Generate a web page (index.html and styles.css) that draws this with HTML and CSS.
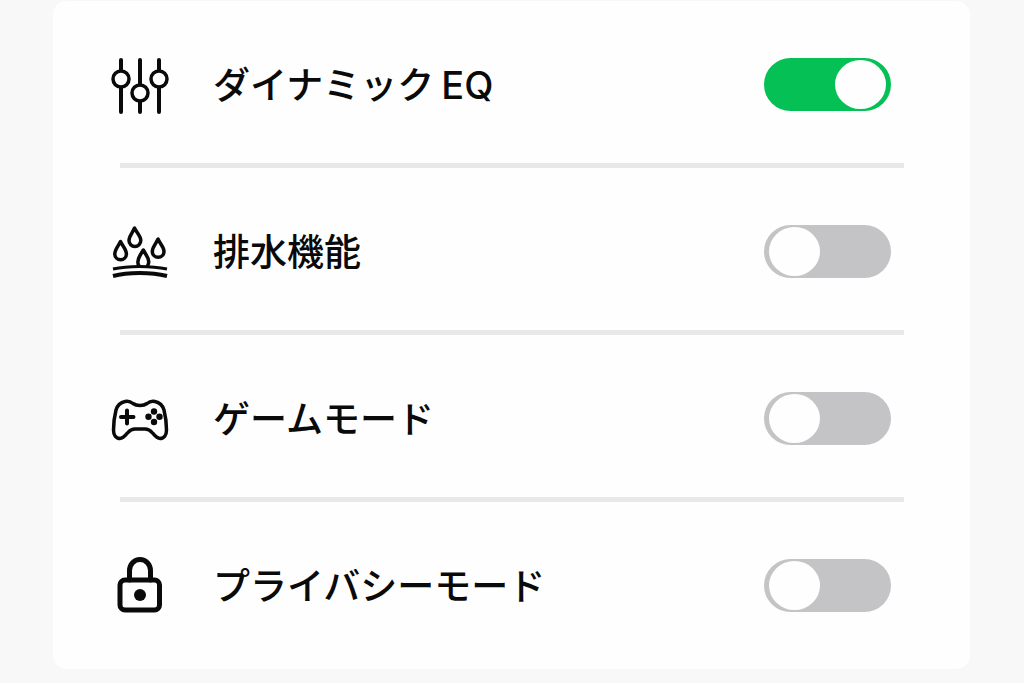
FILE: index.html
```html
<!DOCTYPE html>
<html lang="ja">
<head>
<meta charset="utf-8">
<meta name="viewport" content="width=device-width, initial-scale=1">
<title>モード設定</title>
<link rel="stylesheet" href="styles.css">
</head>
<body>
<main>
<ul class="settings">
  <li class="item">
    <div class="row">
      <svg class="icon" viewBox="0 0 64 64" aria-hidden="true">
        <path class="line" d="M13 7v10M13 35v24M32 7v24M32 49v10M51 7v10M51 35v24"/>
        <g class="line ring"><circle cx="13" cy="26" r="8"/><circle cx="32" cy="40" r="8"/><circle cx="51" cy="26" r="8"/></g>
      </svg>
      <label class="label" for="eq">ダイナミック<span class="latin">EQ</span></label>
      <input class="switch" type="checkbox" role="switch" id="eq" checked>
    </div>
  </li>
  <li class="item">
    <div class="row">
      <svg class="icon" viewBox="0 0 64 64" aria-hidden="true">
        <g class="line drop">
          <path d="M26.500 8C24.500 13 21 16 21 20.500a5.800 5.800 0 0 0 11.800 0C32.800 16 28.800 13 26.500 8Z"/>
          <path d="M12.500 21.500C10.500 26 6.800 29.500 6.800 34a5.700 5.700 0 0 0 11.600 0C18.400 29.500 14.500 26 12.500 21.500Z"/>
          <path d="M50 19C48 24 44.300 27 44.300 31.500a5.800 5.800 0 0 0 11.700 0C56 27 52 24 50 19Z"/>
          <path d="M31 46C28.500 42 30.500 38 32 35.500L35.300 30L38.500 35.500C40.500 38.500 42 42 39.500 46"/>
        </g>
        <path class="line ground" d="M5 49C20 45.500 43 45.500 59 49"/>
        <path class="line ground wide" d="M5 56C20 52 43 52 59 56"/>
      </svg>
      <label class="label" for="drain">排水機能</label>
      <input class="switch" type="checkbox" role="switch" id="drain">
    </div>
  </li>
  <li class="item">
    <div class="row">
      <svg class="icon" viewBox="0 0 64 64" aria-hidden="true">
        <path class="line ring" d="M17 14.500C20 13.500 22.500 14.500 25 16.500C27 18 29 18.500 32 18.500C35 18.500 37 18 39 16.500C41.500 14.500 44 13.500 47 14.500C52 15.500 54.500 18 56 23C57.500 29 58.500 37 58.500 43C58.500 48 56 51.500 52 51.500C49 51.500 47 49 44.500 46C42 43 40 42 37 42H27C24 42 22 43 19.500 46C17 49 15 51.500 12 51.500C8 51.500 5.500 48 5.500 43C5.500 37 6.500 29 8 23C9.500 18 12 15.500 17 14.500Z"/>
        <path class="line" d="M13 30h12.500M19 23.500v13"/>
        <circle cx="46" cy="24.500" r="3.200"/><circle cx="46" cy="35" r="3.200"/><circle cx="40.500" cy="29.800" r="3.200"/><circle cx="51.500" cy="29.800" r="3.200"/>
      </svg>
      <label class="label" for="game">ゲームモード</label>
      <input class="switch" type="checkbox" role="switch" id="game">
    </div>
  </li>
  <li class="item">
    <div class="row">
      <svg class="icon" viewBox="0 0 64 64" aria-hidden="true">
        <g class="line bold"><rect x="12" y="26" width="39.500" height="30" rx="5"/><path d="M21.500 26V16.500a10.500 11 0 0 1 21 0V26"/></g>
        <circle cx="32" cy="41" r="6"/>
      </svg>
      <label class="label" for="privacy">プライバシーモード</label>
      <input class="switch" type="checkbox" role="switch" id="privacy">
    </div>
  </li>
</ul>
</main>
</body>
</html>
```
FILE: styles.css
```css
* { box-sizing: border-box; }

body {
  margin: 0;
  background: #f8f8f8;
  color: #0a0a0a;
  font-family: "Noto Sans CJK JP", sans-serif;
}

main { padding: 1px 54px 14px 53px; }

.settings {
  margin: 0;
  padding: 0;
  list-style: none;
  background: #fefefe;
  border-radius: 14px;
}

.item { padding-top: 5px; }

.item::after {
  content: "";
  display: block;
  height: 5px;
  margin: 0 66px 0 67px;
  background: #e8e8e8;
}

.item:last-child::after { background: none; }

.row {
  display: flex;
  align-items: center;
  min-height: 157px;
  padding: 0 79px 0 55px;
}

.icon {
  flex: none;
  width: 64px;
  height: 64px;
  margin-right: 41px;
  fill: #0a0a0a;
}

.line {
  fill: none;
  stroke: #0a0a0a;
  stroke-width: 4;
  stroke-linecap: round;
  stroke-linejoin: round;
}

.ring { stroke-width: 3.5; }
.drop { stroke-width: 3.5; }
.ground { stroke-width: 3; stroke-linecap: butt; }
.wide { stroke-width: 4; }
.bold { stroke-width: 5; }

.label {
  flex: 1;
  padding-bottom: 3px;
  font-size: 37px;
  font-weight: 500;
  line-height: 48px;
}

.latin {
  margin-left: 7px;
  font-family: Inter, sans-serif;
  font-size: 38px;
  line-height: 1;
}

.switch {
  appearance: none;
  flex: none;
  display: flex;
  align-items: center;
  width: 127px;
  height: 53px;
  margin: 0;
  padding: 0 5px;
  border-radius: 27px;
  background: #c4c4c6;
  cursor: pointer;
}

.switch::before {
  content: "";
  width: 51px;
  height: 49px;
  border-radius: 50%;
  background: #fefefe;
}

.switch:checked {
  justify-content: flex-end;
  background: #05c055;
}

.switch:focus-visible {
  outline: 3px solid #7ab6ff;
  outline-offset: 3px;
}
```
